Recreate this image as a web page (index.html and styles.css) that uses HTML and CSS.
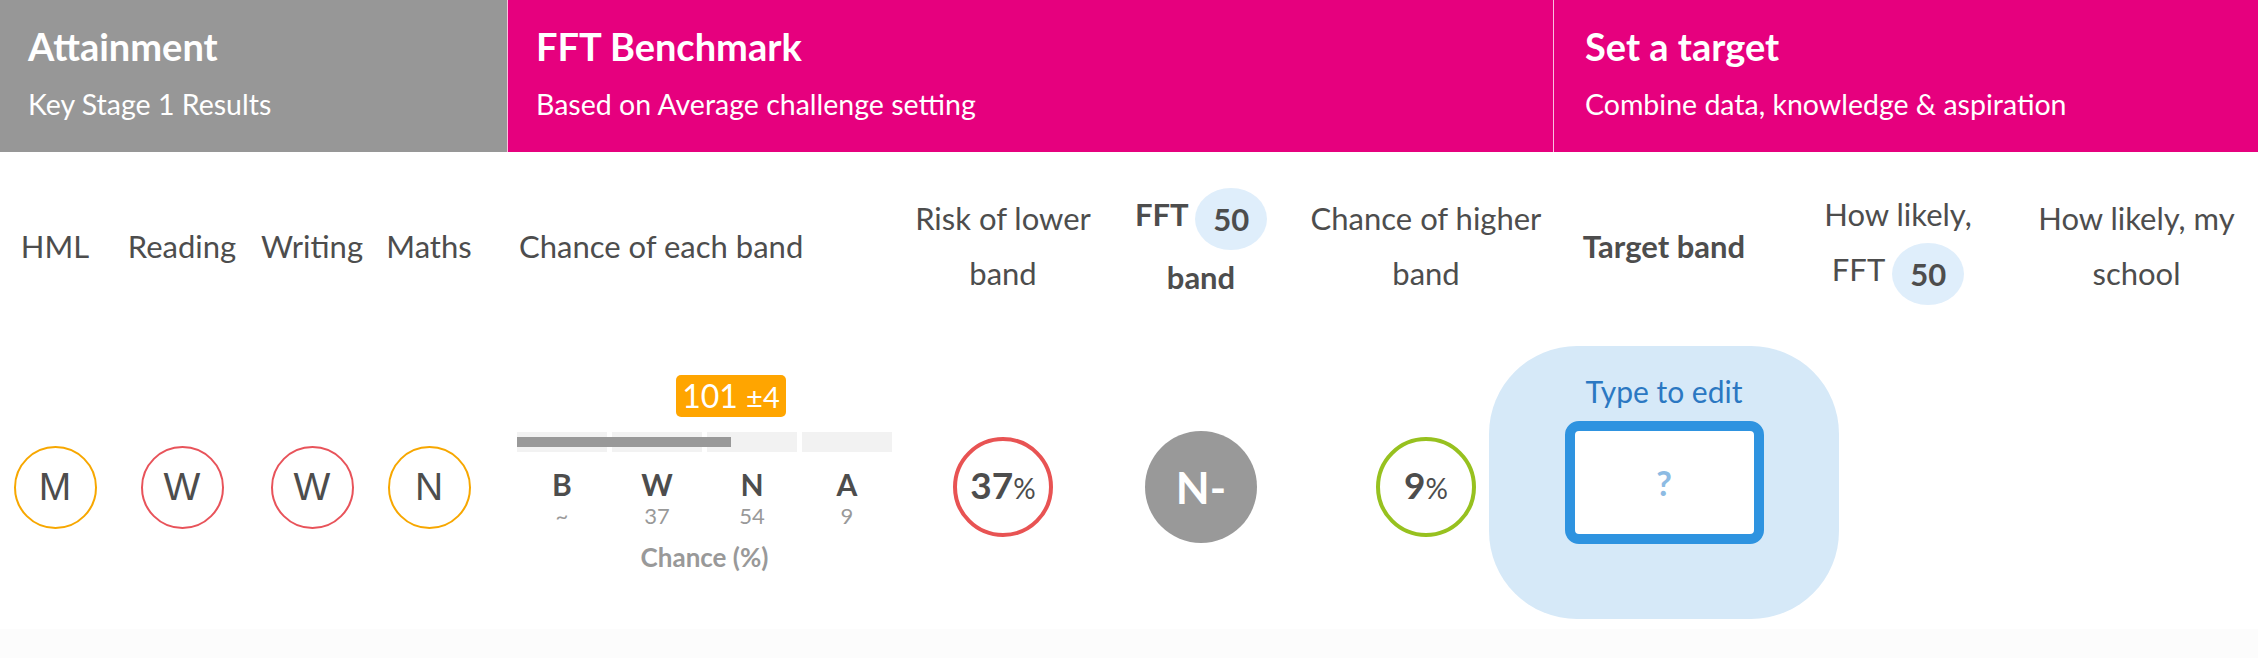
FILE: index.html
```html
<!DOCTYPE html>
<html lang="en">
<head>
<meta charset="utf-8">
<title>Target setting</title>
<link rel="stylesheet" href="styles.css">
</head>
<body>
<div class="page">
  <header class="hdr">
    <div class="hsec hsec-att">
      <div class="htitle">Attainment</div>
      <div class="hsub">Key Stage 1 Results</div>
    </div>
    <div class="hsec hsec-fft">
      <div class="htitle">FFT Benchmark</div>
      <div class="hsub">Based on Average challenge setting</div>
    </div>
    <div class="hsec hsec-tgt">
      <div class="htitle">Set a target</div>
      <div class="hsub">Combine data, knowledge &amp; aspiration</div>
    </div>
  </header>

  <div class="grid">
    <div class="th">HML</div>
    <div class="th">Reading</div>
    <div class="th">Writing</div>
    <div class="th">Maths</div>
    <div class="th th-left">Chance of each band</div>
    <div class="th">Risk of lower<br>band</div>
    <div class="th th-bold">FFT <span class="pill">50</span><br>band</div>
    <div class="th">Chance of higher<br>band</div>
    <div class="th th-bold">Target band</div>
    <div class="th">How likely,<br>FFT <span class="pill pill-bold">50</span></div>
    <div class="th">How likely, my<br>school</div>

    <div class="grade grade-amber">M</div>
    <div class="grade grade-red">W</div>
    <div class="grade grade-red">W</div>
    <div class="grade grade-amber">N</div>

    <div class="chance">
      <div class="est"><span class="est-badge" style="margin-left: calc(57.07% - 55px)">101 <span class="pm">±4</span></span></div>
      <div class="bands">
        <div class="seg"></div>
        <div class="seg"></div>
        <div class="seg"></div>
        <div class="seg"></div>
        <div class="fill" style="width: 57.07%"></div>
      </div>
      <div class="blabels">
        <div class="bl"><div class="bl-letter">B</div><div class="bl-num">~</div></div>
        <div class="bl"><div class="bl-letter">W</div><div class="bl-num">37</div></div>
        <div class="bl"><div class="bl-letter">N</div><div class="bl-num">54</div></div>
        <div class="bl"><div class="bl-letter">A</div><div class="bl-num">9</div></div>
      </div>
      <div class="chance-cap">Chance (%)</div>
    </div>

    <div class="pct pct-red"><span class="pct-num">37</span><span class="pct-sign">%</span></div>
    <div class="bandball">N-</div>
    <div class="pct pct-green"><span class="pct-num">9</span><span class="pct-sign">%</span></div>

    <div class="card">
      <div class="card-label">Type to edit</div>
      <div class="card-input">?</div>
    </div>
    <div class="empty"></div>
    <div class="empty"></div>
  </div>
  <div class="foot"></div>
</div>
</body>
</html>
```

FILE: styles.css
```css
* { box-sizing: border-box; }

html, body {
  margin: 0;
  padding: 0;
  background: #ffffff;
}

body {
  font-family: Lato, "Liberation Sans", sans-serif;
  color: #4d4d4d;
}

.page {
  width: 2258px;
}

/* ---------- header band ---------- */
.hdr {
  display: flex;
  height: 152px;
  color: #ffffff;
}

.hsec {
  padding: 24px 0 0 28px;
}

.hsec-att {
  width: 507px;
  background: #979797;
}

.hsec-fft {
  width: 1046px;
  background: #e6007e;
  border-left: 1px solid rgba(255, 255, 255, 0.75);
}

.hsec-tgt {
  flex: 1;
  background: #e6007e;
  border-left: 1px solid rgba(255, 255, 255, 0.75);
  padding-left: 31px;
}

.htitle {
  font-size: 38px;
  font-weight: 700;
  line-height: 44px;
}

.hsub {
  margin-top: 19px;
  font-size: 28.5px;
  line-height: 34px;
}

/* ---------- table grid ---------- */
.grid {
  display: grid;
  grid-template-columns: 110px 144px 116px 118px 421px 188px 208px 242px 234px 234px 243px;
  grid-template-rows: 188px 289px;
  align-items: center;
  justify-items: center;
}

.th {
  font-size: 31px;
  line-height: 55px;
  text-align: center;
  white-space: nowrap;
}

.th-left {
  justify-self: start;
  padding-left: 31px;
}

.th-bold {
  font-weight: 700;
}

.pill {
  display: inline-block;
  padding: 13px 18px;
  line-height: 36px;
  border-radius: 50%;
  background: #dfeefb;
  vertical-align: middle;
  font-weight: 700;
}

/* ---------- grade circles ---------- */
.grade {
  width: 83px;
  height: 83px;
  margin-top: 5px;
  border-radius: 50%;
  border: 2px solid;
  display: flex;
  align-items: center;
  justify-content: center;
  font-family: "Liberation Sans", Arial, sans-serif;
  font-size: 39px;
  color: #4d4d4d;
}

.grade-amber { border-color: #f7a700; }
.grade-red { border-color: #e8535a; }

/* ---------- chance of each band ---------- */
.chance {
  justify-self: start;
  margin-left: 29px;
  margin-bottom: 21px;
  width: 375px;
}

.est {
  height: 42px;
  margin-bottom: 15px;
}

.est-badge {
  display: inline-block;
  width: 110px;
  height: 42px;
  line-height: 42px;
  border-radius: 5px;
  background: #ffa500;
  color: #ffffff;
  font-size: 32px;
  text-align: center;
}

.pm {
  font-size: 29px;
}

.bands {
  position: relative;
  display: grid;
  grid-template-columns: repeat(4, 1fr);
  gap: 5px;
  height: 20px;
}

.seg {
  background: #f2f2f2;
}

.fill {
  position: absolute;
  left: 0;
  top: 5px;
  height: 10px;
  background: #999999;
}

.blabels {
  display: grid;
  grid-template-columns: repeat(4, 1fr);
  gap: 5px;
  margin-top: 14px;
  text-align: center;
}

.bl-letter {
  font-size: 30px;
  line-height: 36px;
  font-weight: 700;
  color: #4d4d4d;
}

.bl-num {
  margin-top: 1px;
  font-size: 22px;
  line-height: 26px;
  color: #999999;
}

.chance-cap {
  margin-top: 13px;
  font-size: 26px;
  line-height: 31px;
  font-weight: 700;
  color: #999999;
  text-align: center;
}

/* ---------- percentages ---------- */
.pct {
  width: 100px;
  height: 100px;
  margin-top: 5px;
  border-radius: 50%;
  border: 4px solid;
  display: flex;
  align-items: baseline;
  justify-content: center;
  padding-top: 22px;
  color: #4d4d4d;
}

.pct-red { border-color: #e85353; }
.pct-green { border-color: #97c11f; }

.pct-num {
  font-size: 37px;
  font-weight: 700;
  line-height: 44px;
}

.pct-sign {
  font-size: 28px;
  font-weight: 400;
}

.bandball {
  width: 112px;
  height: 112px;
  margin-top: 5px;
  border-radius: 50%;
  background: #999999;
  color: #ffffff;
  display: flex;
  align-items: center;
  justify-content: center;
  font-size: 44px;
  font-weight: 700;
}

/* ---------- target card ---------- */
.card {
  width: 350px;
  height: 273px;
  margin: 0 -58px 4px;
  border-radius: 88px;
  background: #d6e9f8;
  display: flex;
  flex-direction: column;
  align-items: center;
  padding-top: 27px;
}

.card-label {
  font-size: 30px;
  line-height: 36px;
  color: #2b78c2;
  margin-bottom: 12px;
}

.card-input {
  width: 199px;
  height: 123px;
  border: 10px solid #2e93e0;
  border-radius: 14px;
  background: #ffffff;
  display: flex;
  align-items: center;
  justify-content: center;
  font-size: 34px;
  font-weight: 700;
  color: #8dbbe3;
}

.foot {
  height: 40px;
  background: #fcfcfc;
}
```
